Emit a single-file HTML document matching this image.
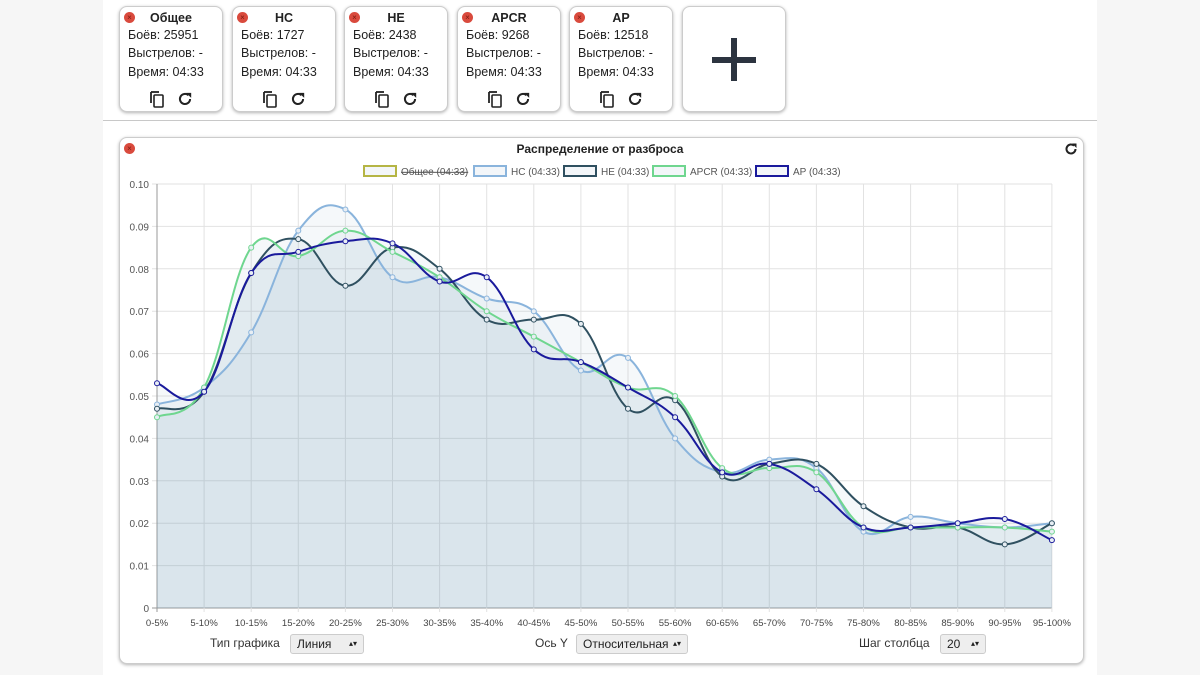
<!DOCTYPE html>
<html><head><meta charset="utf-8"><style>
body{margin:0;width:1200px;height:675px;background:#f6f6f6;font-family:"Liberation Sans",sans-serif;position:relative;overflow:hidden;color:#222}
.page{position:absolute;left:103px;top:0;width:994px;height:675px;background:#fff}
.card{position:absolute;top:6px;width:102px;height:104px;border:1px solid #ccc;border-radius:8px;background:#fff;box-shadow:0 1px 3px rgba(0,0,0,.3);font-size:12.5px}
.card .t{position:absolute;top:4px;left:0;right:0;text-align:center;font-weight:bold;font-size:12.5px}
.card .l{position:absolute;left:8px}
.x{position:absolute;width:11px;height:11px;border-radius:50%;background:#d94a3d;color:#7a1a10;font-size:8px;line-height:11px;text-align:center}
.ic{position:absolute;top:83px;left:0;right:0;text-align:center}
.sep{position:absolute;left:103px;top:120px;width:994px;height:1px;background:#c8c8c8}
.panel{position:absolute;left:119px;top:137px;width:963px;height:525px;border:1px solid #ccc;border-radius:8px;background:#fff;box-shadow:0 1px 3px rgba(0,0,0,.3)}
.sel{display:inline-block;background:#eee;border:1px solid #ccc;border-radius:3px;padding:1px 6px;font-size:12px;height:16px;line-height:16px;position:absolute}
.lab{position:absolute;font-size:12px;color:#333}
</style></head><body>
<div class="page"></div>
<div id="cards"></div>
<div class="card" style="left:682px;width:102px"><svg width="102" height="104"><rect x="29" y="50" width="44" height="6" fill="#2c3440"/><rect x="48" y="31" width="6" height="43" fill="#2c3440"/></svg></div>
<div class="sep"></div>
<div class="panel"></div>
<div class="x" style="left:124px;top:143px">×</div>
<div style="position:absolute;left:0;width:1200px;top:142px;text-align:center;font-weight:bold;font-size:12px">Распределение от разброса</div>
<svg style="position:absolute;left:1063px;top:141px" width="16" height="16" viewBox="0 0 16 16"><path d="M12.5 8a4.5 4.5 0 1 1-1.4-3.3" fill="none" stroke="#222" stroke-width="2"/><path d="M9 2.5h4.5V7z" fill="#222"/></svg>
<svg id="ch" style="position:absolute;left:0;top:0" width="1200" height="675"></svg>
<div class="lab" style="left:210px;top:636px">Тип графика</div><div class="sel" style="left:290px;top:634px;width:60px">Линия <span style="float:right;font-size:8px">▴▾</span></div>
<div class="lab" style="left:535px;top:636px">Ось Y</div><div class="sel" style="left:576px;top:634px;width:98px">Относительная <span style="float:right;font-size:8px">▴▾</span></div>
<div class="lab" style="left:859px;top:636px">Шаг столбца</div><div class="sel" style="left:940px;top:634px;width:32px">20 <span style="float:right;font-size:8px">▴▾</span></div>
<script>
var names=[["Общее","25951"],["НС","1727"],["HE","2438"],["APCR","9268"],["AP","12518"]];
var xs=[119,232,344,457,569],h="";
var copy='<svg width="18" height="18" viewBox="0 0 18 18"><path d="M3 2v11" stroke="#222" stroke-width="1.8" fill="none"/><path d="M3 2h8" stroke="#222" stroke-width="1.8"/><rect x="6" y="5" width="9" height="12" rx="1" fill="none" stroke="#222" stroke-width="1.6"/></svg>';
var ref='<svg width="18" height="18" viewBox="0 0 16 16" style="margin-left:10px"><path d="M12.5 8a4.5 4.5 0 1 1-1.4-3.3" fill="none" stroke="#222" stroke-width="1.8"/><path d="M9 2.5h4.5V7z" fill="#222"/></svg>';
names.forEach(function(n,i){h+='<div class="card" style="left:'+xs[i]+'px"><div class="x" style="left:4px;top:5px">×</div><div class="t">'+n[0]+'</div><div class="l" style="top:21px">Боёв: '+n[1]+'</div><div class="l" style="top:39px">Выстрелов: -</div><div class="l" style="top:58px">Время: 04:33</div><div class="ic">'+copy+ref+'</div></div>'});
document.getElementById('cards').innerHTML=h;
var s="",X0=157,DX=47.1,Y0=608,K=4240;
for(var j=0;j<=10;j++){var y=Y0-j*42.4;s+='<line x1="152" x2="1052" y1="'+y+'" y2="'+y+'" stroke="'+(j?"#e2e2e2":"#999")+'"/><text x="149" y="'+(y+4)+'" font-size="10" text-anchor="end" fill="#555">'+(j?(j/100).toFixed(2):"0")+'</text>';}
for(var i=0;i<20;i++){var x=X0+i*DX;s+='<line x1="'+x+'" x2="'+x+'" y1="184" y2="612" stroke="'+(i?"#e2e2e2":"#999")+'"/><text x="'+x+'" y="626" font-size="9.5" text-anchor="middle" fill="#444">'+(i*5)+"-"+(i*5+5)+'%</text>';}
var D=[
["#8ab4dc",[.048,.052,.065,.089,.094,.078,.078,.073,.070,.056,.059,.040,.032,.035,.033,.018,.0215,.020,.019,.020]],
["#2f5060",[.047,.051,.079,.087,.076,.085,.080,.068,.068,.067,.047,.049,.031,.034,.034,.024,.019,.019,.015,.020]],
["#6fd68f",[.045,.052,.085,.083,.089,.084,.078,.070,.064,.058,.052,.050,.033,.033,.032,.019,.019,.019,.019,.018]],
["#1a1a9c",[.053,.051,.079,.084,.0865,.086,.077,.078,.061,.058,.052,.045,.032,.034,.028,.019,.019,.020,.021,.016]]];
function path(v){var p=v.map(function(d,i){return[X0+i*DX,Y0-d*K]});var t=0.4,str="M"+p[0][0]+","+p[0][1];
for(var i=0;i<p.length-1;i++){var a=p[Math.max(i-1,0)],b=p[i],c=p[i+1],d=p[Math.min(i+2,p.length-1)];
str+="C"+(b[0]+(c[0]-a[0])*t/2)+","+(b[1]+(c[1]-a[1])*t/2)+" "+(c[0]-(d[0]-b[0])*t/2)+","+(c[1]-(d[1]-b[1])*t/2)+" "+c[0]+","+c[1];}return str;}
var f="",l="";
D.forEach(function(d){var p=path(d[1]);f+='<path d="'+p+'L1052,608L157,608Z" fill="rgba(120,160,190,0.07)"/>';l+='<path d="'+p+'" fill="none" stroke="'+d[0]+'" stroke-width="2"/>';d[1].forEach(function(v,i){l+='<circle cx="'+(X0+i*DX)+'" cy="'+(Y0-v*K)+'" r="2.5" fill="#e8eef4" stroke="'+d[0]+'"/>'})});
s+=f+l;
var lg=[["#b5b545","Общее (04:33)",363,1],["#8ab4dc","НС (04:33)",473],["#2f5060","HE (04:33)",563],["#6fd68f","APCR (04:33)",652],["#1a1a9c","AP (04:33)",755]];
lg.forEach(function(g){s+='<rect x="'+(g[2]+1)+'" y="166" width="32" height="10" fill="#f3f6f9" stroke="'+g[0]+'" stroke-width="2"/><text x="'+(g[2]+38)+'" y="175" font-size="10" fill="#555"'+(g[3]?' text-decoration="line-through"':'')+'>'+g[1]+'</text>';});
document.getElementById('ch').innerHTML=s;
</script>
</body></html>
